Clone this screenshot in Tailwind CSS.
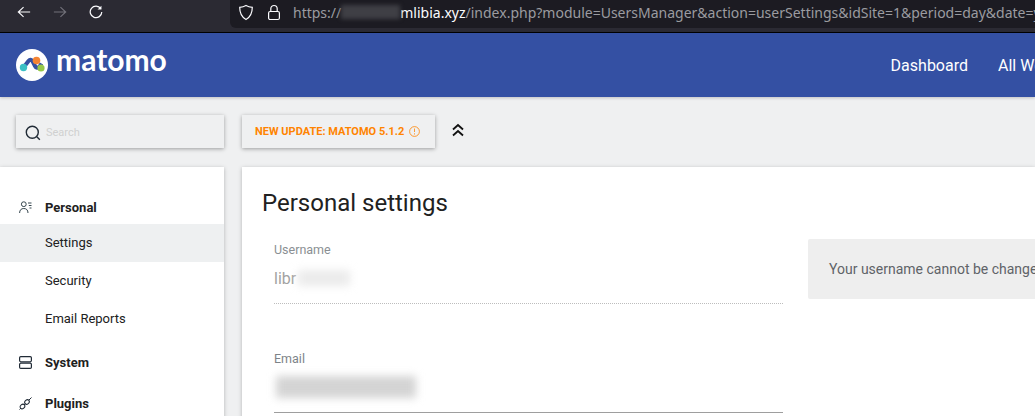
<!DOCTYPE html>
<html lang="en">
<head>
  <meta charset="UTF-8" />
  <title>Personal settings - Matomo</title>
  <script src="https://cdn.jsdelivr.net/npm/@tailwindcss/browser@4"></script>
</head>
<body class="h-[416px] w-[1035px] overflow-hidden bg-[#eff0f1] font-['Roboto',sans-serif] text-[#212121]">
  <!-- browser toolbar -->
  <div class="flex h-[33px] border-b border-black bg-[#2b2a33]">
    <div class="flex w-[230px] shrink-0 gap-[22px] pt-[4px] pl-[17px]">
      <svg class="h-[16px] w-[14px] text-[#fbfbfe]" viewBox="0 0 16 18" fill="none" stroke="currentColor" stroke-width="1.300"><path d="M15 9H1.500M7.500 3.500 1.500 9l6 5.500"/></svg>
      <svg class="h-[16px] w-[14px] text-[#72717a]" viewBox="0 0 16 18" fill="none" stroke="currentColor" stroke-width="1.300"><path d="M1 9h13.500M8.500 3.500l6 5.500-6 5.500"/></svg>
      <svg class="h-[16px] w-[14px] text-[#fbfbfe]" viewBox="0 0 16 18" fill="none" stroke="currentColor" stroke-width="1.400"><path d="M13.500 5.200A6.600 6.600 0 1 0 14.600 9"/><path d="M14.200 1.800v4.400H9.800" fill="currentColor" stroke="none"/></svg>
    </div>
    <div class="flex h-[28px] min-w-0 flex-1 items-center overflow-hidden rounded-bl-[6px] bg-[#1c1b22] pb-[4px] pl-[8px] font-['Noto_Sans',sans-serif] text-[14px] whitespace-nowrap text-[#9b9ba0]">
      <svg class="mr-[13px] h-[17px] w-[16px] shrink-0 text-[#fbfbfe]" viewBox="0 0 16 17" fill="none" stroke="currentColor" stroke-width="1.2"><path d="M8 1.500c2 1.200 4 1.700 6.300 1.800 0 5.500-1.800 9.800-6.300 12.200C3.500 13.100 1.700 8.800 1.700 3.300 4 3.200 6 2.700 8 1.500Z"/></svg>
      <svg class="mr-[12px] h-[17px] w-[14px] shrink-0 text-[#fbfbfe]" viewBox="0 0 14 17" fill="none" stroke="currentColor" stroke-width="1.2"><rect x="1.600" y="7.500" width="10.800" height="8" rx="1.500"/><path d="M3.800 7.500V4.700a3.200 3.200 0 0 1 6.400 0v2.800"/></svg>
      <span>https://</span><span class="inline-block h-[14px] w-[59px] shrink-0 bg-[#3f3f45] blur-[2px]"></span><span class="text-[#fbfbfe]">mlibia.xyz</span><span>/index.php?module=UsersManager&amp;action=userSettings&amp;idSite=1&amp;period=day&amp;date=yesterday</span>
    </div>
  </div>

  <!-- matomo header -->
  <header class="flex h-[64px] items-center justify-between overflow-hidden bg-[#3450a3] pl-[16px] shadow-[0_1px_3px_rgba(0,0,0,0.2)]">
    <div class="flex items-center gap-[8px]">
      <svg class="h-[32px] w-[32px]" viewBox="0 0 32 32">
        <circle cx="16" cy="16" r="16" fill="#fff"/>
        <path d="M7.500 18.500 12.500 12c1.500-2 3-1.500 4 0l2.500 5c1 2 3 2.500 4.500 .5l2-3" fill="none" stroke="#3450a3" stroke-width="4"/>
        <circle cx="7.500" cy="18.500" r="3.700" fill="#3cc0c5"/>
        <circle cx="20.500" cy="11.500" r="3.800" fill="#f38334"/>
        <circle cx="25" cy="19" r="3.600" fill="#95c748"/>
      </svg>
      <span class="pb-[12px] font-['Lato',sans-serif] text-[30px] leading-none font-bold text-white">matomo</span>
    </div>
    <nav class="flex gap-[30px] pt-[1px] text-[16px] whitespace-nowrap text-white">
      <span>Dashboard</span>
      <span class="w-[37px] overflow-hidden">All Websites</span>
    </nav>
  </header>

  <!-- search and update row -->
  <div class="flex items-center pt-[18px] pl-[16px]">
    <div class="flex h-[33px] w-[208px] items-center gap-[5px] bg-[#eff0f1] pl-[9px] shadow-[0_1px_4px_rgba(0,0,0,0.35)]">
      <svg class="mt-[3px] h-[16px] w-[16px] text-[#212b36]" viewBox="0 0 16 16" fill="none" stroke="currentColor" stroke-width="1.400"><circle cx="7.300" cy="7.300" r="6"/><path d="m11.800 11.800 3 3"/></svg>
      <span class="pt-[3px] text-[11px] text-[#d0d0d0]">Search</span>
    </div>
    <div class="ml-[18px] flex h-[33px] w-[193px] items-center bg-[#eff0f1] pl-[13px] shadow-[0_1px_4px_rgba(0,0,0,0.35)]">
      <span class="pt-[2px] text-[11px] font-bold whitespace-nowrap text-[#ff8400]">NEW UPDATE: MATOMO 5.1.2</span>
      <svg class="ml-[5px] h-[11px] w-[11px] text-[#ff8400]" viewBox="0 0 11 11" fill="none" stroke="currentColor" stroke-width=".8"><circle cx="5.500" cy="5.500" r="4.900"/><path d="M5.500 2.500v3.500M5.500 7.300v1.200"/></svg>
    </div>
    <svg class="mb-[3px] ml-[16px] h-[14px] w-[14px] text-[#111]" viewBox="0 0 14 14" fill="none" stroke="currentColor" stroke-width="1.800"><path d="M2 6.500 7 2l5 4.500M2 12.500 7 8l5 4.500"/></svg>
  </div>

  <div class="mt-[19px] flex gap-[18px]">
    <!-- left menu -->
    <aside class="h-[260px] w-[224px] shrink-0 bg-white pt-[31px] text-[13px] shadow-[0_1px_4px_rgba(0,0,0,0.25)]">
      <div class="flex h-[19px] items-center gap-[13px] pl-[19px] font-bold">
        <svg class="h-[13px] w-[13px] text-[#37474f]" viewBox="0 0 13 13" fill="none" stroke="currentColor"><circle cx="4.800" cy="3.200" r="2.400"/><path d="M.6 12c0-3 1.600-4.500 4.200-4.500S9 9 9 12M9 2h3.500M9.800 4.500h2.700M10.500 7H12.500"/></svg>
        <span>Personal</span>
      </div>
      <div class="mt-[7px] flex h-[38px] items-center bg-[#eef0f1] pl-[45px]">Settings</div>
      <div class="flex h-[38px] items-center pl-[45px]">Security</div>
      <div class="flex h-[38px] items-center pl-[45px]">Email Reports</div>
      <div class="mt-[15px] flex h-[19px] items-center gap-[13px] pl-[19px] font-bold">
        <svg class="h-[13px] w-[13px] text-[#212b36]" viewBox="0 0 13 13" fill="none" stroke="currentColor" stroke-width="1.200"><rect x=".6" y=".6" width="11.800" height="5.200" rx="1.200"/><rect x=".6" y="7.200" width="11.800" height="5.200" rx="1.200"/></svg>
        <span>System</span>
      </div>
      <div class="mt-[22px] flex h-[19px] items-center gap-[13px] pl-[19px] font-bold">
        <svg class="h-[13px] w-[13px] text-[#212b36]" viewBox="0 0 13 13" fill="none" stroke="currentColor"><ellipse cx="3.500" cy="9.500" rx="2.500" ry="2" transform="rotate(-40 3.500 9.500)"/><ellipse cx="8" cy="5" rx="2.500" ry="2" transform="rotate(-40 8 5)"/><path d="M.5 12.500 2 11M10 3l2.500-2.500M5 8l1.500-1.500"/></svg>
        <span>Plugins</span>
      </div>
    </aside>

    <!-- settings panel -->
    <main class="h-[260px] min-w-0 flex-1 overflow-hidden bg-white pt-[22px] pl-[20px] shadow-[0_1px_4px_rgba(0,0,0,0.25)]">
      <h1 class="text-[24px] leading-[29px] font-normal">Personal settings</h1>
      <div class="mt-[21px] flex gap-[25px]">
        <div class="w-[521px] shrink-0 pt-[3px] pl-[12px]">
          <label class="block text-[12.500px] leading-[15px] text-[#8a8f93]">Username</label>
          <div class="relative mt-[6px] h-[41px] border-b border-dotted border-[#bdbdbd] pt-[6px] text-[16px] leading-[19px] text-[#a2a2a2]">
            <span>libr</span>
            <span class="absolute top-[7px] left-[24px] h-[16px] w-[52px] bg-[#ebebeb] blur-[4px]"></span>
          </div>
          <label class="mt-[47px] block text-[12.500px] leading-[15px] text-[#7d8388]">Email</label>
          <div class="relative mt-[6px] h-[41px] border-b border-[#9e9e9e]">
            <span class="absolute top-[4px] left-[2px] h-[22px] w-[140px] bg-[#d4d4d4] blur-[4px]"></span>
          </div>
        </div>
        <div class="flex h-[60px] w-[300px] shrink-0 items-center rounded-[2px] bg-[#eeeeee] pl-[21px] text-[14px] whitespace-nowrap text-[#5f6368]">Your username cannot be changed.</div>
      </div>
    </main>
  </div>
</body>
</html>
